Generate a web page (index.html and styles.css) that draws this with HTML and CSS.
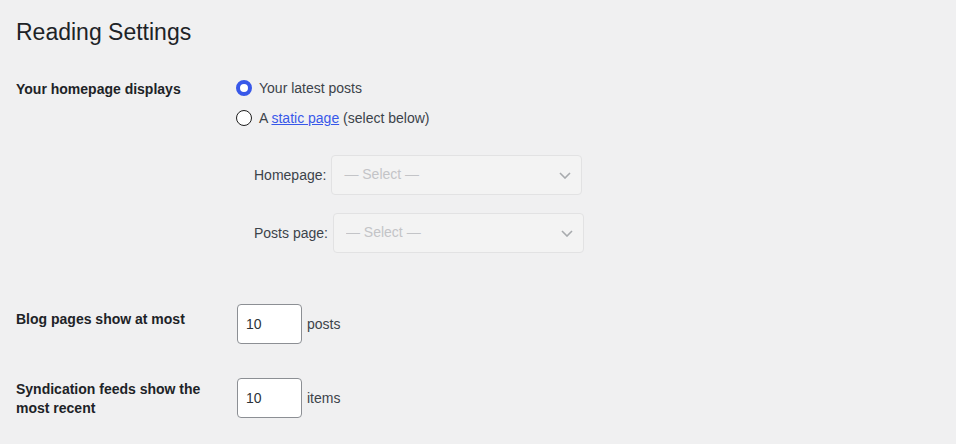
FILE: index.html
```html
<!DOCTYPE html>
<html lang="en">
<head>
<meta charset="utf-8">
<title>Reading Settings</title>
<link rel="stylesheet" href="styles.css">
</head>
<body>
<div class="wrap">
  <h1 class="title">Reading Settings</h1>

  <div class="row row-home">
    <div class="th th-home">Your homepage displays</div>
    <div class="td">
      <label class="radio-row"><input type="radio" name="show" class="radio" checked><span>Your latest posts</span></label>
      <label class="radio-row radio-row-2"><input type="radio" name="show" class="radio"><span>A <a href="#" class="link">static page</a> (select below)</span></label>
      <div class="pages">
        <div class="page-row page-row-1">
          <span class="page-label">Homepage:</span>
          <div class="select-wrap">
            <select class="select"><option>— Select —</option></select>
            <svg class="chevron" width="12" height="7" viewBox="0 0 12 7"><path d="M1 1l5 5 5-5" fill="none" stroke="#a7aaad" stroke-width="1.6"/></svg>
          </div>
        </div>
        <div class="page-row page-row-2">
          <span class="page-label">Posts page:</span>
          <div class="select-wrap">
            <select class="select"><option>— Select —</option></select>
            <svg class="chevron" width="12" height="7" viewBox="0 0 12 7"><path d="M1 1l5 5 5-5" fill="none" stroke="#a7aaad" stroke-width="1.6"/></svg>
          </div>
        </div>
      </div>
    </div>
  </div>

  <div class="row row-blog">
    <div class="th th-blog">Blog pages show at most</div>
    <div class="td td-num">
      <input type="number" class="num" value="10">
      <span class="unit">posts</span>
    </div>
  </div>

  <div class="row row-feed">
    <div class="th th-feed">Syndication feeds show the most recent</div>
    <div class="td td-num">
      <input type="number" class="num" value="10">
      <span class="unit">items</span>
    </div>
  </div>
</div>
</body>
</html>
```
FILE: styles.css
```css
html, body {
  margin: 0;
  padding: 0;
  background: #f0f0f1;
}
body {
  font-family: "Liberation Sans", Arial, sans-serif;
  font-size: 14px;
  color: #3c434a;
}
.wrap {
  padding: 0 16px;
}
.title {
  margin: 18px 0 0;
  font-size: 23px;
  font-weight: 400;
  line-height: 29.9px;
  color: #1d2327;
}
.row {
  display: flex;
}
.row-home { margin-top: 30.4px; }
.row-blog { margin-top: 51px; }
.row-feed { margin-top: 34px; }
.th {
  width: 220px;
  flex: none;
  font-weight: 700;
  line-height: 18.2px;
  color: #1d2327;
}
.th-home { margin-top: 2px; }
.th-blog { margin-top: 6.3px; }
.th-feed { margin-top: 2.3px; width: 200px; margin-right: 20px; line-height: 18.8px; }
.td {
  flex: 1;
}
.radio-row {
  display: flex;
  align-items: center;
  height: 20px;
  line-height: 20px;
  gap: 7px;
}
.radio-row-2 { margin-top: 10px; }
.radio {
  -webkit-appearance: none;
  appearance: none;
  margin: 0;
  width: 16px;
  height: 16px;
  border-radius: 50%;
  border: 1px solid #1e1e1e;
  background: #fff;
  box-sizing: border-box;
}
.radio:checked {
  border: 4px solid #3858e9;
}
.link {
  color: #3858e9;
  text-decoration: underline;
}
.pages {
  margin-top: 26.6px;
  padding-left: 18px;
}
.page-row {
  display: flex;
  align-items: center;
  gap: 5px;
}
.page-row-2 { margin-top: 18px; }
.page-label {
  line-height: 20px;
}
.select-wrap {
  position: relative;
  width: 251px;
  height: 40px;
}
.select {
  -webkit-appearance: none;
  appearance: none;
  width: 100%;
  height: 100%;
  margin: 0;
  box-sizing: border-box;
  border: 1px solid #e2e2e3;
  border-radius: 4px;
  background: #f3f3f3;
  color: #c3c4c7;
  font-family: "Liberation Sans", Arial, sans-serif;
  font-size: 14px;
  padding: 0 30px 2px 12px;
}
.chevron {
  position: absolute;
  right: 11px;
  top: 17px;
}
.td-num {
  display: flex;
  align-items: center;
  gap: 5px;
  padding-left: 1px;
}
.num {
  -moz-appearance: textfield;
  appearance: textfield;
  width: 65px;
  height: 40px;
  box-sizing: border-box;
  margin: 0;
  border: 1px solid #8c8f94;
  border-radius: 4px;
  background: #fff;
  color: #2c3338;
  font-family: "Liberation Sans", Arial, sans-serif;
  font-size: 14px;
  padding: 0 8px;
}
.num::-webkit-outer-spin-button,
.num::-webkit-inner-spin-button {
  -webkit-appearance: none;
  margin: 0;
}
.unit {
  line-height: 20px;
}
```
